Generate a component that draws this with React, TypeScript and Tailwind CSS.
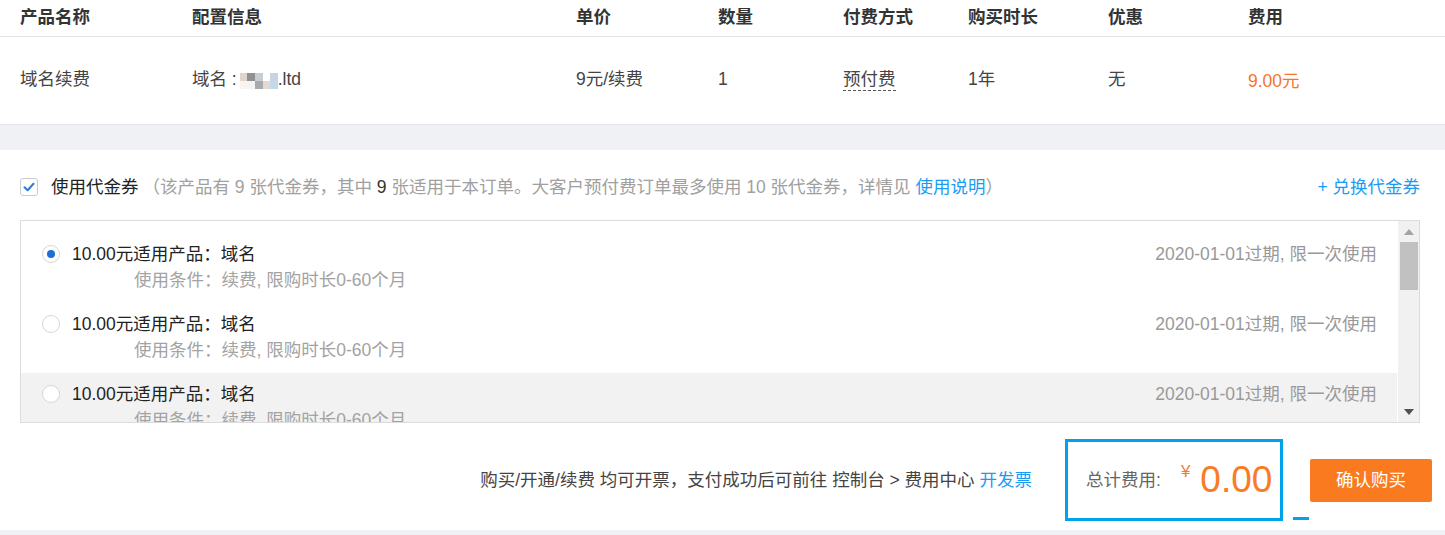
import React from "react";

const columns = ["产品名称", "配置信息", "单价", "数量", "付费方式", "购买时长", "优惠", "费用"];

const coupons = [
  { checked: true, active: false },
  { checked: false, active: false },
  { checked: false, active: true },
];

// blurred domain name, drawn as a few mosaic blocks
const mosaic = [
  "#ddd5cc", "#8f9197", "#c9ccd4", "#ffffff", "#c9d4e3",
  "#fbf4ec", "#f4f4f4", "#a8a9ad", "#e2dad0", "#c3d9e6",
];

function Radio({ checked }: { checked: boolean }) {
  return (
    <span className="w-[18px] h-[18px] rounded-full border border-[#d6d6d6] bg-white flex items-center justify-center shrink-0">
      {checked && <span className="w-[8px] h-[8px] rounded-full bg-[#1d6fd6]" />}
    </span>
  );
}

export default function App() {
  return (
    <div className="w-[1445px] h-[535px] bg-[#f0f1f5] overflow-hidden font-['Liberation_Sans','Noto_Sans_CJK_SC',sans-serif] text-[17.5px] text-[#333]">
      {/* order table */}
      <div className="bg-white">
        <div className="grid grid-cols-[172px_384px_142px_125px_125px_140px_140px_1fr] pl-[20px] h-[37px] items-center border-b border-[#dfe3e8] font-bold leading-[20px] text-[#333]">
          {columns.map((c) => (
            <div key={c} className="pb-[2px]">{c}</div>
          ))}
        </div>
        <div className="grid grid-cols-[172px_384px_142px_125px_125px_140px_140px_1fr] pl-[20px] h-[87px] items-center leading-[20px] text-[#444] pb-[3px]">
          <div>域名续费</div>
          <div className="flex items-center">
            <span>域名 :</span>
            <span className="grid grid-cols-5 w-[38px] h-[16px] ml-[3px] mt-[4px]">
              {mosaic.map((m, i) => (
                <span key={i} style={{ backgroundColor: m }} />
              ))}
            </span>
            <span>.ltd</span>
          </div>
          <div>9元/续费</div>
          <div>1</div>
          <div>
            <span className="border-b border-dashed border-[#555] pb-[1px]">预付费</span>
          </div>
          <div>1年</div>
          <div>无</div>
          <div className="text-[#f7742b] pt-[4px]">9.00元</div>
        </div>
      </div>

      <div className="h-[26px] border-t border-[#e6e8ec]" />

      {/* coupon section */}
      <div className="bg-white pl-[20px] pr-[25px] pt-[27px] pb-[9px]">
        <div className="flex items-center h-[20px] leading-[20px]">
          <span className="w-[18px] h-[18px] rounded-[3px] border border-[#c9ccd2] bg-white flex items-center justify-center">
            <svg width="12" height="10" viewBox="0 0 12 10">
              <path d="M1.5 5.2 L4.6 8.2 L10.5 1.8" fill="none" stroke="#2b7bd6" strokeWidth="2" strokeLinecap="round" strokeLinejoin="round" />
            </svg>
          </span>
          <span className="ml-[13px] text-[#222]">使用代金券</span>
          <span className="ml-[4px] text-[#a0a0a0]">
            （该产品有 9 张代金券，其中 <span className="text-[#333]">9</span> 张适用于本订单。大客户预付费订单最多使用 10 张代金券，详情见{" "}
            <span className="text-[#1b9cf2]">使用说明</span>）
          </span>
          <span className="ml-auto text-[#1b9cf2]">+ 兑换代金券</span>
        </div>

        <div className="mt-[23px] h-[203px] border border-[#dcdcdc] flex">
          <div className="flex-1 overflow-hidden pt-[12px]">
            {coupons.map((c, i) => (
              <div key={i} className={`h-[70px] pl-[21px] pr-[20px] pt-[11px] ${c.active ? "bg-[#f2f2f2]" : ""}`}>
                <div className="flex items-center h-[20px] leading-[20px]">
                  <Radio checked={c.checked} />
                  <span className="ml-[12px] text-[#222]">10.00元适用产品：域名</span>
                  <span className="ml-auto text-[#999]">2020-01-01过期, 限一次使用</span>
                </div>
                <div className="mt-[6px] h-[20px] leading-[20px] pl-[92px] text-[#a3a3a3]">
                  使用条件：续费, 限购时长0-60个月
                </div>
              </div>
            ))}
          </div>
          {/* scrollbar */}
          <div className="w-[22px] bg-[#f1f1f1] border-l border-white flex flex-col items-center">
            <div className="h-[21px] flex items-center justify-center">
              <svg width="10" height="6" viewBox="0 0 10 6">
                <path d="M0 6 L5 0 L10 6 Z" fill="#a3a3a3" />
              </svg>
            </div>
            <div className="w-[18px] h-[48px] bg-[#c1c1c1]" />
            <div className="flex-1" />
            <div className="h-[21px] flex items-center justify-center">
              <svg width="10" height="6" viewBox="0 0 10 6">
                <path d="M0 0 L10 0 L5 6 Z" fill="#505050" />
              </svg>
            </div>
          </div>
        </div>

        {/* total + submit */}
        <div className="mt-[16px] flex items-center justify-end mr-[-12px]">
          <span className="text-[#444] leading-[20px]">
            购买/开通/续费 均可开票，支付成功后可前往 控制台 &gt; 费用中心 <span className="text-[#1b9cf2]">开发票</span>
          </span>
          <div className="ml-[33px] w-[218px] h-[82px] border-[3px] border-[#02a2e8] flex items-center pl-[18px]">
            <span className="text-[#666] leading-[20px]">总计费用:</span>
            <span className="ml-[20px] text-[#f97b26] text-[17px] leading-[20px] mb-[16px]">¥</span>
            <span className="ml-[10px] text-[#f97b26] text-[37px] leading-[40px] font-['Liberation_Sans',sans-serif]">0.00</span>
          </div>
          <span className="self-end mb-[1px] ml-[10px] w-[16px] h-[3px] bg-[#02a2e8]" />
          <button className="ml-[1px] w-[122px] h-[43px] rounded-[2px] bg-[#fa7a20] text-white leading-[20px]">确认购买</button>
        </div>
      </div>
    </div>
  );
}
